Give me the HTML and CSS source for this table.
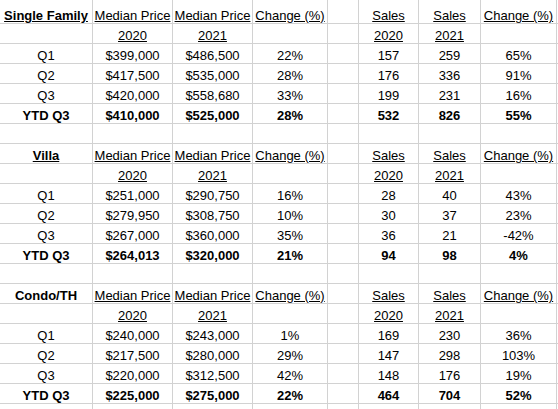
FILE: index.html
```html
<!DOCTYPE html>
<html>
<head>
    <title>Median Price and Sales 2020 vs 2021</title>
    <link rel="stylesheet" href="styles.css">
</head>
<body>
    <div class="sheet-wrap">
    <table class="sheet">
        <colgroup>
            <col class="col-a">
            <col class="col-b">
            <col class="col-c">
            <col class="col-d">
            <col class="col-e">
            <col class="col-f">
            <col class="col-g">
            <col class="col-h">
            <col class="col-i">
        </colgroup>

        <!-- Single Family -->
        <tr class="first">
            <td class="b u">Single Family</td>
            <td class="u">Median Price</td>
            <td class="u">Median Price</td>
            <td class="u">Change (%)</td>
            <td></td>
            <td class="u">Sales</td>
            <td class="u">Sales</td>
            <td class="u">Change (%)</td>
            <td></td>
        </tr>
        <tr>
            <td></td><td class="u">2020</td><td class="u">2021</td><td></td><td></td>
            <td class="u">2020</td><td class="u">2021</td><td></td><td></td>
        </tr>
        <tr>
            <td>Q1</td><td>$399,000</td><td>$486,500</td><td>22%</td><td></td>
            <td>157</td><td>259</td><td>65%</td><td></td>
        </tr>
        <tr>
            <td>Q2</td><td>$417,500</td><td>$535,000</td><td>28%</td><td></td>
            <td>176</td><td>336</td><td>91%</td><td></td>
        </tr>
        <tr>
            <td>Q3</td><td>$420,000</td><td>$558,680</td><td>33%</td><td></td>
            <td>199</td><td>231</td><td>16%</td><td></td>
        </tr>
        <tr class="b">
            <td>YTD Q3</td><td>$410,000</td><td>$525,000</td><td>28%</td><td></td>
            <td>532</td><td>826</td><td>55%</td><td></td>
        </tr>
        <tr>
            <td></td><td></td><td></td><td></td><td></td><td></td><td></td><td></td><td></td>
        </tr>

        <!-- Villa -->
        <tr>
            <td class="b u">Villa</td>
            <td class="u">Median Price</td>
            <td class="u">Median Price</td>
            <td class="u">Change (%)</td>
            <td></td>
            <td class="u">Sales</td>
            <td class="u">Sales</td>
            <td class="u">Change (%)</td>
            <td></td>
        </tr>
        <tr>
            <td></td><td class="u">2020</td><td class="u">2021</td><td></td><td></td>
            <td class="u">2020</td><td class="u">2021</td><td></td><td></td>
        </tr>
        <tr>
            <td>Q1</td><td>$251,000</td><td>$290,750</td><td>16%</td><td></td>
            <td>28</td><td>40</td><td>43%</td><td></td>
        </tr>
        <tr>
            <td>Q2</td><td>$279,950</td><td>$308,750</td><td>10%</td><td></td>
            <td>30</td><td>37</td><td>23%</td><td></td>
        </tr>
        <tr>
            <td>Q3</td><td>$267,000</td><td>$360,000</td><td>35%</td><td></td>
            <td>36</td><td>21</td><td>-42%</td><td></td>
        </tr>
        <tr class="b">
            <td>YTD Q3</td><td>$264,013</td><td>$320,000</td><td>21%</td><td></td>
            <td>94</td><td>98</td><td>4%</td><td></td>
        </tr>
        <tr>
            <td></td><td></td><td></td><td></td><td></td><td></td><td></td><td></td><td></td>
        </tr>

        <!-- Condo/TH -->
        <tr>
            <td class="b">Condo/TH</td>
            <td class="u">Median Price</td>
            <td class="u">Median Price</td>
            <td class="u">Change (%)</td>
            <td></td>
            <td class="u">Sales</td>
            <td class="u">Sales</td>
            <td class="u">Change (%)</td>
            <td></td>
        </tr>
        <tr>
            <td></td><td class="u">2020</td><td class="u">2021</td><td></td><td></td>
            <td class="u">2020</td><td class="u">2021</td><td></td><td></td>
        </tr>
        <tr>
            <td>Q1</td><td>$240,000</td><td>$243,000</td><td>1%</td><td></td>
            <td>169</td><td>230</td><td>36%</td><td></td>
        </tr>
        <tr>
            <td>Q2</td><td>$217,500</td><td>$280,000</td><td>29%</td><td></td>
            <td>147</td><td>298</td><td>103%</td><td></td>
        </tr>
        <tr>
            <td>Q3</td><td>$220,000</td><td>$312,500</td><td>42%</td><td></td>
            <td>148</td><td>176</td><td>19%</td><td></td>
        </tr>
        <tr class="b">
            <td>YTD Q3</td><td>$225,000</td><td>$275,000</td><td>22%</td><td></td>
            <td>464</td><td>704</td><td>52%</td><td></td>
        </tr>
        <tr>
            <td></td><td></td><td></td><td></td><td></td><td></td><td></td><td></td><td></td>
        </tr>
    </table>
    </div>
</body>
</html>
```

FILE: styles.css
```css
html, body {
    margin: 0;
    padding: 0;
    overflow: hidden;
    background: white;
}

/* clip the sheet to the visible window, like a cropped spreadsheet */
.sheet-wrap {
    width: 558px;
    height: 409px;
    overflow: hidden;
}

.sheet {
    table-layout: fixed;
    width: 599px;
    margin: -1px 0 0 -1px;
    border-collapse: separate;
    border-spacing: 1px;
    background: #d2d2d2;
    font-family: "Liberation Sans", Arial, sans-serif;
    font-size: 13px;
    color: #000;
}

.col-a { width: 92px; }
.col-b { width: 79px; }
.col-c { width: 79px; }
.col-d { width: 74px; }
.col-e { width: 30px; }
.col-f { width: 59px; }
.col-g { width: 61px; }
.col-h { width: 75px; }
.col-i { width: 40px; }

.sheet td {
    background: white;
    height: 19px;
    padding: 0;
    line-height: 14px;
    text-align: center;
    vertical-align: bottom;
    white-space: nowrap;
}

.sheet tr.first td {
    height: 23px;
}

.b {
    font-weight: bold;
}

.u {
    text-decoration: underline;
}
```
